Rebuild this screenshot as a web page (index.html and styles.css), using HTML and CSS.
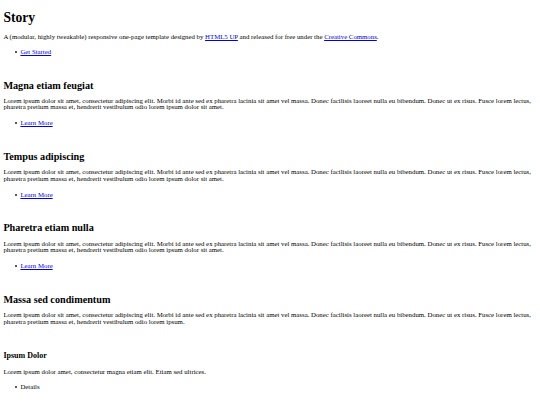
FILE: index.html
```html
<!DOCTYPE html>
<html>
<head>
<meta charset="utf-8">
<title>Story</title>
<link rel="stylesheet" href="styles.css">
</head>
<body>
<header class="banner">
  <h1>Story</h1>
  <p>A (modular, highly tweakable) responsive one-page template designed by <a href="#">HTML5 UP</a> and released for free under the <a href="#">Creative Commons</a>.</p>
  <ul><li><a href="#">Get Started</a></li></ul>
</header>
<section class="spot">
  <h2>Magna etiam feugiat</h2>
  <p>Lorem ipsum dolor sit amet, consectetur adipiscing elit. Morbi id ante sed ex pharetra lacinia sit amet vel massa. Donec facilisis laoreet nulla eu bibendum. Donec ut ex risus. Fusce lorem lectus, pharetra pretium massa et, hendrerit vestibulum odio lorem ipsum dolor sit amet.</p>
  <ul><li><a href="#">Learn More</a></li></ul>
</section>
<section class="spot">
  <h2>Tempus adipiscing</h2>
  <p>Lorem ipsum dolor sit amet, consectetur adipiscing elit. Morbi id ante sed ex pharetra lacinia sit amet vel massa. Donec facilisis laoreet nulla eu bibendum. Donec ut ex risus. Fusce lorem lectus, pharetra pretium massa et, hendrerit vestibulum odio lorem ipsum dolor sit amet.</p>
  <ul><li><a href="#">Learn More</a></li></ul>
</section>
<section class="spot">
  <h2>Pharetra etiam nulla</h2>
  <p>Lorem ipsum dolor sit amet, consectetur adipiscing elit. Morbi id ante sed ex pharetra lacinia sit amet vel massa. Donec facilisis laoreet nulla eu bibendum. Donec ut ex risus. Fusce lorem lectus, pharetra pretium massa et, hendrerit vestibulum odio lorem ipsum dolor sit amet.</p>
  <ul><li><a href="#">Learn More</a></li></ul>
</section>
<section class="spot">
  <h2>Massa sed condimentum</h2>
  <p>Lorem ipsum dolor sit amet, consectetur adipiscing elit. Morbi id ante sed ex pharetra lacinia sit amet vel massa. Donec facilisis laoreet nulla eu bibendum. Donec ut ex risus. Fusce lorem lectus, pharetra pretium massa et, hendrerit vestibulum odio lorem ipsum.</p>
</section>
<section class="spot spot-small">
  <h3>Ipsum Dolor</h3>
  <p>Lorem ipsum dolor amet, consectetur magna etiam elit. Etiam sed ultrices.</p>
  <ul><li>Details</li></ul>
</section>
</body>
</html>
```

FILE: styles.css
```css
html { background: #fff; }
body {
  margin: 0 3.4px;
  font-family: "Liberation Serif", "Times New Roman", serif;
  font-size: 6.8px;
  line-height: 6.6px;
  color: #000;
}
h1, h2, h3, p, ul { margin: 0; }
h1 { font-size: 13.6px; line-height: 13.6px; font-weight: bold; }
h2 { font-size: 10.2px; line-height: 10.2px; font-weight: bold; }
h3 { font-size: 8px; line-height: 8px; font-weight: bold; }
ul { padding-left: 17px; list-style: none; }
li::before {
  content: "";
  display: inline-block;
  width: 2px;
  height: 2px;
  border-radius: 50%;
  background: #222;
  margin: 0 3px 0.5px -5px;
  vertical-align: middle;
}
a { color: #0000ee; text-decoration: underline; }

.banner { padding-top: 10.9px; }
.banner p { margin-top: 9.4px; }
.banner ul { margin-top: 8.2px; }

.spot { margin-top: 25.3px; }
.spot p { margin-top: 7.1px; }
.spot ul { margin-top: 9.1px; }

.spot-small { margin-top: 26.5px; }
.spot-small p { margin-top: 8.7px; }
.spot-small ul { margin-top: 9px; }
```
